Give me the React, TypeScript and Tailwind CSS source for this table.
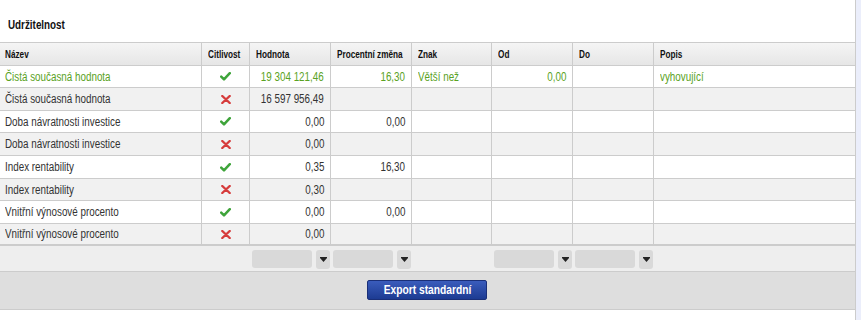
import React from 'react';

const cols = 'grid grid-cols-[202px_48px_81px_81px_80px_81px_81px_201px]';

const headers = ['Název', 'Citlivost', 'Hodnota', 'Procentní změna', 'Znak', 'Od', 'Do', 'Popis'];

type Row = {
  name: string;
  ok: boolean;
  value: string;
  change?: string;
  sign?: string;
  from?: string;
  desc?: string;
  green?: boolean;
};

const rows: Row[] = [
  { name: 'Čistá současná hodnota', ok: true, value: '19 304 121,46', change: '16,30', sign: 'Větší než', from: '0,00', desc: 'vyhovující', green: true },
  { name: 'Čistá současná hodnota', ok: false, value: '16 597 956,49' },
  { name: 'Doba návratnosti investice', ok: true, value: '0,00', change: '0,00' },
  { name: 'Doba návratnosti investice', ok: false, value: '0,00' },
  { name: 'Index rentability', ok: true, value: '0,35', change: '16,30' },
  { name: 'Index rentability', ok: false, value: '0,30' },
  { name: 'Vnitřní výnosové procento', ok: true, value: '0,00', change: '0,00' },
  { name: 'Vnitřní výnosové procento', ok: false, value: '0,00' },
];

// heights alternate so the 8 rows fill 180px like the original
const rowHeights = ['h-[22px]', 'h-[23px]', 'h-[22px]', 'h-[23px]', 'h-[23px]', 'h-[22px]', 'h-[23px]', 'h-[22px]'];

// the original uses a narrow face (Arial Narrow); squeeze Liberation Sans to match
function Narrow({ children, right, center }: { children?: React.ReactNode; right?: boolean; center?: boolean }) {
  const origin = right ? 'origin-right' : center ? 'origin-center' : 'origin-left';
  return <span className={`inline-block whitespace-nowrap scale-x-[0.82] ${origin}`}>{children}</span>;
}

function Check() {
  return (
    <svg width="11" height="9" viewBox="0 0 11 9">
      <path d="M1.2 4.6 L4 7.4 L9.8 1.2" fill="none" stroke="#3ea43a" strokeWidth="2.5" strokeLinecap="round" strokeLinejoin="round" />
    </svg>
  );
}

function Cross() {
  return (
    <svg width="10" height="9" viewBox="0 0 10 9">
      <path d="M1.3 1 L8.7 8 M8.7 1 L1.3 8" fill="none" stroke="#d63b3b" strokeWidth="2.4" strokeLinecap="round" />
    </svg>
  );
}

function Filter() {
  return (
    <div className="flex items-start gap-[4px] pl-[2px] pt-[4px]">
      <div className="w-[60px] h-[18px] rounded-[3px] bg-[#d9d9d9]" />
      <div className="w-[14px] h-[19px] rounded-[3px] bg-[#d9d9d9] flex items-center justify-center">
        <svg width="7" height="5" viewBox="0 0 7 5">
          <path d="M0 0 H7 V1 L3.5 5 L0 1 Z" fill="#222" />
        </svg>
      </div>
    </div>
  );
}

export default function App() {
  const cell = 'border-r border-[#cccccc] flex items-center px-1.5 overflow-hidden whitespace-nowrap';

  return (
    <div className="flex w-[861px] h-[320px] bg-[#ebeefb] font-['Liberation_Sans',Arial,sans-serif]">
      <div className="w-[856px] h-full bg-white border-r border-[#cccccc] flex flex-col">
        {/* Title */}
        <div className="h-[42px] pl-2 pt-[18px] text-[12px] leading-[14px] font-bold text-[#111]">
          <Narrow>Udržitelnost</Narrow>
        </div>

        {/* Header */}
        <div className={`${cols} h-[24px] border-y border-[#cccccc] bg-gradient-to-b from-[#f5f5f5] to-[#e6e6e6]`}>
          {headers.map((h, i) => (
            <div
              key={h}
              className={`flex items-center text-[10px] font-bold text-[#111] whitespace-nowrap ${i < 7 ? 'border-r border-[#cccccc]' : ''} ${i === 0 ? 'pl-[5px]' : 'pl-[6px]'}`}
            >
              <Narrow>{h}</Narrow>
            </div>
          ))}
        </div>

        {/* Rows */}
        {rows.map((r, i) => {
          const last = i === rows.length - 1;
          const tone = r.green ? 'text-[#5aa224]' : 'text-[#333333]';
          return (
            <div
              key={i}
              className={`${cols} ${rowHeights[i]} ${last ? 'border-b-2' : 'border-b'} border-[#cccccc] ${i % 2 === 0 ? 'bg-white' : 'bg-[#f1f1f1]'} text-[12px] ${tone}`}
            >
              <div className={`${cell} pl-[5px]`}><Narrow>{r.name}</Narrow></div>
              <div className={`${cell} justify-center`}>{r.ok ? <Check /> : <Cross />}</div>
              <div className={`${cell} justify-end`}><Narrow right>{r.value}</Narrow></div>
              <div className={`${cell} justify-end`}><Narrow right>{r.change}</Narrow></div>
              <div className={cell}><Narrow>{r.sign}</Narrow></div>
              <div className={`${cell} justify-end`}><Narrow right>{r.from}</Narrow></div>
              <div className={cell}></div>
              <div className="flex items-center px-1.5 whitespace-nowrap"><Narrow>{r.desc}</Narrow></div>
            </div>
          );
        })}

        {/* Filters */}
        <div className={`${cols} h-[26px] border-b border-[#cccccc] bg-[#eeeeee]`}>
          <div />
          <div />
          <Filter />
          <Filter />
          <div />
          <Filter />
          <Filter />
          <div />
        </div>

        {/* Actions */}
        <div className="h-[38px] border-b border-[#cccccc] bg-[#dedede] flex justify-center pt-[8px] pr-[1px]">
          <button className="w-[120px] h-[20px] rounded-[2px] border border-[#1a2f78] bg-gradient-to-b from-[#3a5cbc] to-[#1d3b92] text-white text-[12.5px] font-bold leading-none flex items-center justify-center">
            <Narrow center>Export standardní</Narrow>
          </button>
        </div>
      </div>
    </div>
  );
}
